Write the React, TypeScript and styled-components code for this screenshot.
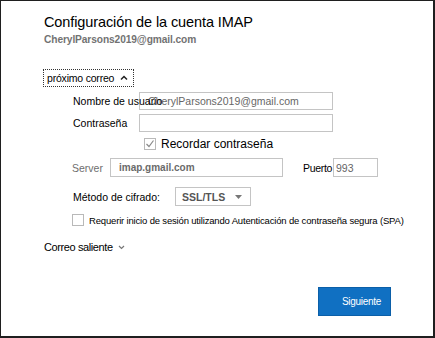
import styled, { createGlobalStyle } from "styled-components";

const GlobalStyle = createGlobalStyle`
  body {
    margin: 0;
    background: #ffffff;
    font-family: "Liberation Sans", Arial, sans-serif;
  }
`;

const Frame = styled.div`
  width: 435px;
  height: 338px;
  box-sizing: border-box;
  border-style: solid;
  border-color: #1f1f1f;
  border-width: 1px 2px 2px 1px;
  padding: 0 42px 20px 43px;
  display: flex;
  flex-direction: column;
  background: #fff;
  color: #000;
`;

const Title = styled.h1`
  margin: 12px 0 0;
  font-size: 14.5px;
  line-height: 18px;
  font-weight: normal;
  letter-spacing: -0.1px;
`;

const Email = styled.div`
  margin-top: 2px;
  font-size: 10.2px;
  line-height: 14px;
  font-weight: bold;
  color: #727272;
  letter-spacing: -0.1px;
`;

const SectionToggle = styled.button`
  align-self: flex-start;
  margin: 22px 0 0 -1px;
  height: 18px;
  padding: 0 5px 0 3px;
  display: inline-flex;
  align-items: center;
  gap: 6px;
  border: 1px dotted #333;
  background: #fff;
  font-family: inherit;
  font-size: 10.5px;
  letter-spacing: -0.2px;
  color: #000;
`;

const Outgoing = styled.div`
  margin-top: 14px;
  display: flex;
  align-items: center;
  gap: 5px;
  font-size: 11px;
  line-height: 14px;
  letter-spacing: -0.4px;
`;

const Fields = styled.div`
  margin-top: 5px;
  padding-left: 29px;
  display: flex;
  flex-direction: column;
`;

const Row = styled.div<{ $top: number }>`
  margin-top: ${(p) => p.$top}px;
  display: flex;
  align-items: center;
`;

const Label = styled.span<{ $width: number; $muted?: boolean }>`
  position: relative;
  z-index: 1;
  width: ${(p) => p.$width}px;
  flex: none;
  white-space: nowrap;
  font-size: 10.5px;
  color: ${(p) => (p.$muted ? "#6e6e6e" : "#000")};
`;

const TextBox = styled.div<{ $width: number; $height: number }>`
  width: ${(p) => p.$width}px;
  height: ${(p) => p.$height}px;
  box-sizing: border-box;
  border: 1px solid #c4c4c4;
  background: #fff;
  display: flex;
  align-items: center;
  padding-left: 8px;
  font-size: 10.5px;
  color: #6a6a6a;
  white-space: nowrap;
  overflow: hidden;
`;

const Value = styled.span<{ $bold?: boolean }>`
  font-weight: ${(p) => (p.$bold ? "bold" : "normal")};
  font-size: ${(p) => (p.$bold ? 10 : 10.5)}px;
  color: ${(p) => (p.$bold ? "#6a6a6a" : "#666")};
`;

const Check = styled.span`
  width: 12px;
  height: 12px;
  flex: none;
  box-sizing: border-box;
  border: 1px solid #b9b9b9;
  background: #fff;
  display: inline-flex;
  align-items: center;
  justify-content: center;
`;

const CheckText = styled.span<{ $small?: boolean }>`
  margin-left: 5px;
  white-space: nowrap;
  font-size: ${(p) => (p.$small ? 9.5 : 12)}px;
  letter-spacing: ${(p) => (p.$small ? "-0.17px" : "0")};
  color: #000;
`;

const PortLabel = styled.span`
  margin-left: 20px;
  width: 30px;
  position: relative;
  z-index: 1;
  white-space: nowrap;
  font-size: 10.5px;
  letter-spacing: -0.3px;
`;

const Select = styled.div`
  width: 76px;
  height: 19px;
  box-sizing: border-box;
  border: 1px solid #c4c4c4;
  display: flex;
  align-items: center;
  justify-content: space-between;
  padding: 0 8px 0 6px;
  font-size: 10.5px;
  font-weight: bold;
  color: #555;
`;

const Footer = styled.div`
  margin-top: auto;
  display: flex;
  justify-content: flex-end;
`;

const PrimaryButton = styled.button`
  width: 73px;
  height: 29px;
  border: 1px solid #0b5fa8;
  background: #1070c2;
  color: #fff;
  font-family: inherit;
  font-size: 10px;
  letter-spacing: -0.3px;
  padding: 0 0 0 14px;
`;

const ChevronUp = () => (
  <svg width="8" height="6" viewBox="0 0 8 6">
    <path d="M1 4.5 L4 1.5 L7 4.5" fill="none" stroke="#222" strokeWidth="1.5" />
  </svg>
);

const ChevronDown = () => (
  <svg width="7" height="5" viewBox="0 0 7 5">
    <path d="M1 1 L3.5 3.5 L6 1" fill="none" stroke="#777" strokeWidth="1.2" />
  </svg>
);

const Tick = () => (
  <svg width="10" height="10" viewBox="0 0 10 10">
    <path d="M1.5 5 L4 7.5 L8.5 1.5" fill="none" stroke="#8a8a8a" strokeWidth="1.2" />
  </svg>
);

const Caret = () => (
  <svg width="7" height="4" viewBox="0 0 7 4">
    <path d="M0 0 H7 L3.5 4 Z" fill="#777" />
  </svg>
);

const App = () => {
  return (
    <>
      <GlobalStyle />
      <Frame>
        <Title>Configuración de la cuenta IMAP</Title>
        <Email>CherylParsons2019@gmail.com</Email>
        <SectionToggle>
          próximo correo
          <ChevronUp />
        </SectionToggle>
        <Fields>
          <Row $top={0}>
            <Label $width={66}>Nombre de usuario</Label>
            <TextBox $width={194} $height={18}>
              <Value>CherylParsons2019@gmail.com</Value>
            </TextBox>
          </Row>
          <Row $top={4}>
            <Label $width={66}>Contraseña</Label>
            <TextBox $width={194} $height={18} />
          </Row>
          <Row $top={5} style={{ paddingLeft: 71 }}>
            <Check>
              <Tick />
            </Check>
            <CheckText>Recordar contraseña</CheckText>
          </Row>
          <Row $top={7} style={{ marginLeft: -1 }}>
            <Label $width={38} $muted>
              Server
            </Label>
            <TextBox $width={173} $height={19}>
              <Value $bold>imap.gmail.com</Value>
            </TextBox>
            <PortLabel>Puerto</PortLabel>
            <TextBox $width={45} $height={19} style={{ paddingLeft: 2 }}>
              <Value>993</Value>
            </TextBox>
          </Row>
          <Row $top={10}>
            <Label $width={102}>Método de cifrado:</Label>
            <Select>
              SSL/TLS
              <Caret />
            </Select>
          </Row>
          <Row $top={8} style={{ marginLeft: -1 }}>
            <Check />
            <CheckText $small>
              Requerir inicio de sesión utilizando Autenticación de contraseña segura (SPA)
            </CheckText>
          </Row>
        </Fields>
        <Outgoing>
          Correo saliente
          <ChevronDown />
        </Outgoing>
        <Footer>
          <PrimaryButton>Siguiente</PrimaryButton>
        </Footer>
      </Frame>
    </>
  );
};

export default App;
